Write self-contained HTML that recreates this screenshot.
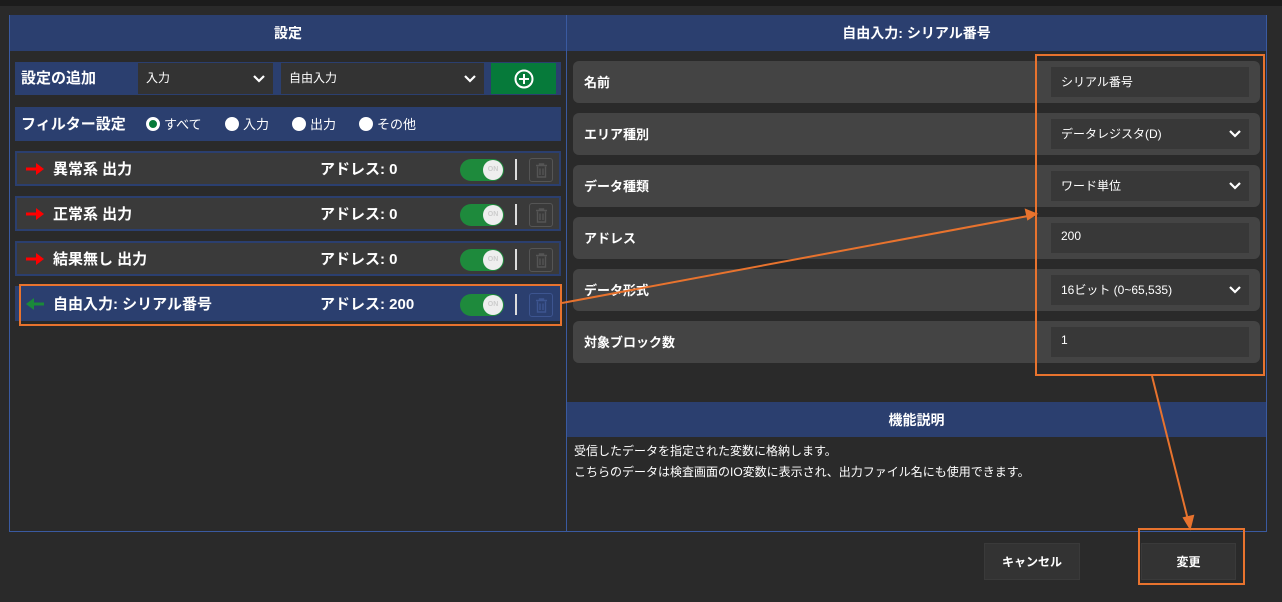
<!DOCTYPE html><html><head><meta charset="utf-8"><style>
*{box-sizing:border-box;margin:0;padding:0}
body{width:1282px;height:602px;background:#2a2a2a;position:relative;overflow:hidden;font-family:"Liberation Sans","Noto Sans CJK JP",sans-serif;color:#fff}
.a{position:absolute}
.hd{background:#2b3f6f;font-weight:bold;font-size:14px;display:flex;align-items:center;justify-content:center}
.item{position:absolute;left:15px;width:546px;height:35px;background:#3a3a3a;border:2px solid #2b3f6f;font-weight:bold;font-size:15px}
.item .t{position:absolute;left:36px;top:5px}
.item .ad{position:absolute;left:303px;top:5px}
.item .ar{position:absolute;left:9px;top:10px}
.tg{position:absolute;left:443px;top:6px;width:44px;height:22px;border-radius:11px;background:#1e8a3c}
.tg i{position:absolute;right:1px;top:1px;width:20px;height:20px;border-radius:50%;background:#eee;font-size:7px;color:#ccc;font-style:normal;text-align:center;line-height:20px}
.dv{position:absolute;left:498px;top:6px;width:2px;height:21px;background:#ddd}
.tr{position:absolute;left:512px;top:5px;width:24px;height:24px;border:1px solid #555;border-radius:3px}
.tr svg{position:absolute;left:5px;top:4px}
.row{position:absolute;left:573px;width:687px;height:42px;background:#444;border-radius:6px;font-size:13px;font-weight:bold}
.row .l{position:absolute;left:11px;top:11px}
.row .in{position:absolute;left:478px;top:6px;width:198px;height:30px;background:#383838;font-weight:normal;font-size:12px;padding:6px 10px}
.chev{position:absolute;right:8px;top:10px}
.rb{display:inline-block;width:14px;height:14px;border-radius:50%;background:#fff;vertical-align:-2px;margin-right:4px}
</style></head><body>
<div class="a" style="left:0;top:0;width:1282px;height:6px;background:#1c1c1c"></div>
<div class="a" style="left:9px;top:15px;width:1258px;height:517px;border:1px solid #3a5aa0"></div>
<div class="a hd" style="left:10px;top:15px;width:556px;height:36px">設定</div>
<div class="a hd" style="left:567px;top:15px;width:699px;height:36px">自由入力: シリアル番号</div>
<div class="a" style="left:566px;top:15px;width:1px;height:516px;background:#3a5aa0"></div>
<div class="a" style="left:15px;top:62px;width:546px;height:33px;background:#2b3f6f"></div>
<div class="a" style="left:21px;top:67px;font-weight:bold;font-size:15px">設定の追加</div>
<div class="a" style="left:138px;top:63px;width:135px;height:31px;background:#333;font-size:12px;padding:6px 8px">入力<svg class="chev" style="top:11px" width="12" height="9" viewBox="0 0 12 9"><path d="M1 2l5 5 5-5" stroke="#fff" stroke-width="2.2" fill="none"/></svg></div>
<div class="a" style="left:281px;top:63px;width:203px;height:31px;background:#333;font-size:12px;padding:6px 8px">自由入力<svg class="chev" style="top:11px" width="12" height="9" viewBox="0 0 12 9"><path d="M1 2l5 5 5-5" stroke="#fff" stroke-width="2.2" fill="none"/></svg></div>
<div class="a" style="left:491px;top:63px;width:65px;height:31px;background:#067a3a"><svg style="position:absolute;left:23px;top:6px" width="20" height="20" viewBox="0 0 20 20"><circle cx="10" cy="10" r="8.5" stroke="#fff" stroke-width="2" fill="none"/><path d="M10 5v10M5 10h10" stroke="#fff" stroke-width="2"/></svg></div>
<div class="a" style="left:15px;top:107px;width:546px;height:34px;background:#2b3f6f;font-size:13px"></div>
<div class="a" style="left:21px;top:113px;font-weight:bold;font-size:15px">フィルター設定</div>
<div class="a" style="left:146px;top:114px;font-size:13px"><span class="rb" style="border:3px solid #fff;background:#067a3a"></span>すべて</div>
<div class="a" style="left:225px;top:114px;font-size:13px"><span class="rb"></span>入力</div>
<div class="a" style="left:292px;top:114px;font-size:13px"><span class="rb"></span>出力</div>
<div class="a" style="left:359px;top:114px;font-size:13px"><span class="rb"></span>その他</div>
<div class="item" style="top:151px"><svg class="ar" width="18" height="12" viewBox="0 0 18 12"><path d="M0 6h12" stroke="#f00" stroke-width="3"/><path d="M10 0l8 6-8 6z" fill="#f00"/></svg><span class="t">異常系 出力</span><span class="ad">アドレス: 0</span><div class="tg"><i>ON</i></div><div class="dv"></div><div class="tr"><svg width="13" height="15" viewBox="0 0 13 15"><path d="M1 2.5h11M4.5 2.5V1h4v1.5M2.5 3.5v10.5h8V3.5M5 5.5v6.5M8 5.5v6.5" stroke="#555" stroke-width="1.4" fill="none"/></svg></div></div>
<div class="item" style="top:196px"><svg class="ar" width="18" height="12" viewBox="0 0 18 12"><path d="M0 6h12" stroke="#f00" stroke-width="3"/><path d="M10 0l8 6-8 6z" fill="#f00"/></svg><span class="t">正常系 出力</span><span class="ad">アドレス: 0</span><div class="tg"><i>ON</i></div><div class="dv"></div><div class="tr"><svg width="13" height="15" viewBox="0 0 13 15"><path d="M1 2.5h11M4.5 2.5V1h4v1.5M2.5 3.5v10.5h8V3.5M5 5.5v6.5M8 5.5v6.5" stroke="#555" stroke-width="1.4" fill="none"/></svg></div></div>
<div class="item" style="top:241px"><svg class="ar" width="18" height="12" viewBox="0 0 18 12"><path d="M0 6h12" stroke="#f00" stroke-width="3"/><path d="M10 0l8 6-8 6z" fill="#f00"/></svg><span class="t">結果無し 出力</span><span class="ad">アドレス: 0</span><div class="tg"><i>ON</i></div><div class="dv"></div><div class="tr"><svg width="13" height="15" viewBox="0 0 13 15"><path d="M1 2.5h11M4.5 2.5V1h4v1.5M2.5 3.5v10.5h8V3.5M5 5.5v6.5M8 5.5v6.5" stroke="#555" stroke-width="1.4" fill="none"/></svg></div></div>
<div class="item" style="top:286px;background:#2b3f6f"><svg class="ar" width="18" height="12" viewBox="0 0 18 12"><path d="M6 6h12" stroke="#1a8a3a" stroke-width="3"/><path d="M8 0l-8 6 8 6z" fill="#1a8a3a"/></svg><span class="t">自由入力: シリアル番号</span><span class="ad">アドレス: 200</span><div class="tg"><i>ON</i></div><div class="dv"></div><div class="tr" style="border-color:#3d5590"><svg width="13" height="15" viewBox="0 0 13 15"><path d="M1 2.5h11M4.5 2.5V1h4v1.5M2.5 3.5v10.5h8V3.5M5 5.5v6.5M8 5.5v6.5" stroke="#3d5590" stroke-width="1.4" fill="none"/></svg></div></div>
<div class="a" style="left:19px;top:284px;width:543px;height:42px;border:2px solid #e8732e"></div>
<div class="row" style="top:61px"><span class="l">名前</span><div class="in">シリアル番号</div></div>
<div class="row" style="top:113px"><span class="l">エリア種別</span><div class="in">データレジスタ(D)<svg class="chev" width="12" height="9" viewBox="0 0 12 9"><path d="M1 2l5 5 5-5" stroke="#fff" stroke-width="2.2" fill="none"/></svg></div></div>
<div class="row" style="top:165px"><span class="l">データ種類</span><div class="in">ワード単位<svg class="chev" width="12" height="9" viewBox="0 0 12 9"><path d="M1 2l5 5 5-5" stroke="#fff" stroke-width="2.2" fill="none"/></svg></div></div>
<div class="row" style="top:217px"><span class="l">アドレス</span><div class="in">200</div></div>
<div class="row" style="top:269px"><span class="l">データ形式</span><div class="in">16ビット (0~65,535)<svg class="chev" width="12" height="9" viewBox="0 0 12 9"><path d="M1 2l5 5 5-5" stroke="#fff" stroke-width="2.2" fill="none"/></svg></div></div>
<div class="row" style="top:321px"><span class="l">対象ブロック数</span><div class="in">1</div></div>
<div class="a" style="left:1035px;top:54px;width:230px;height:322px;border:2px solid #e8732e"></div>
<div class="a hd" style="left:567px;top:402px;width:699px;height:35px">機能説明</div>
<div class="a" style="left:574px;top:441px;font-size:12px;line-height:21px">受信したデータを指定された変数に格納します。<br>こちらのデータは検査画面のIO変数に表示され、出力ファイル名にも使用できます。</div>
<div class="a" style="left:984px;top:543px;width:96px;height:37px;background:#333;border:1px solid #3a3a3a;font-size:12px;font-weight:bold;display:flex;align-items:center;justify-content:center">キャンセル</div>
<div class="a" style="left:1141px;top:543px;width:95px;height:37px;background:#333;border:1px solid #3a3a3a;font-size:12px;font-weight:bold;display:flex;align-items:center;justify-content:center">変更</div>
<div class="a" style="left:1138px;top:528px;width:107px;height:57px;border:2px solid #e8732e"></div>
<svg class="a" style="left:0;top:0" width="1282" height="602"><g stroke="#e8732e" stroke-width="2" fill="#e8732e"><line x1="562" y1="303" x2="1028" y2="216"/><path d="M1036 214l-10 -4 2 9z"/><line x1="1152" y1="376" x2="1188" y2="520"/><path d="M1190 528l-6 -10 9 -2z"/></g></svg>
</body></html>
